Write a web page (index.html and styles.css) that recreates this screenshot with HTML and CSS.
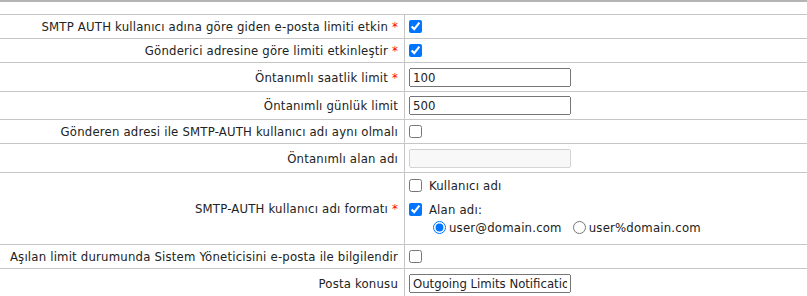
FILE: index.html
```html
<!DOCTYPE html>
<html lang="tr">
<head>
<meta charset="utf-8">
<title>Giden e-posta limitleri</title>
<link rel="stylesheet" href="styles.css">
</head>
<body>
<div class="form">
  <div class="head"></div>

  <div class="row r24">
    <div class="label">SMTP AUTH kullanıcı adına göre giden e-posta limiti etkin <span class="req">*</span></div>
    <div class="field"><input type="checkbox" class="cb" checked></div>
  </div>

  <div class="row r24">
    <div class="label">Gönderici adresine göre limiti etkinleştir <span class="req">*</span></div>
    <div class="field"><input type="checkbox" class="cb" checked></div>
  </div>

  <div class="row r29">
    <div class="label">Öntanımlı saatlik limit <span class="req">*</span></div>
    <div class="field"><input type="text" class="txt" value="100"></div>
  </div>

  <div class="row r28">
    <div class="label">Öntanımlı günlük limit</div>
    <div class="field"><input type="text" class="txt" value="500"></div>
  </div>

  <div class="row r24">
    <div class="label">Gönderen adresi ile SMTP-AUTH kullanıcı adı aynı olmalı</div>
    <div class="field"><input type="checkbox" class="cb"></div>
  </div>

  <div class="row r29">
    <div class="label">Öntanımlı alan adı</div>
    <div class="field"><input type="text" class="txt" disabled></div>
  </div>

  <div class="row r72">
    <div class="label">SMTP-AUTH kullanıcı adı formatı <span class="req">*</span></div>
    <div class="field multi">
      <label class="opt"><input type="checkbox" class="cb"> Kullanıcı adı</label>
      <label class="opt"><input type="checkbox" class="cb" checked> Alan adı:</label>
      <div class="radios">
        <label class="radio"><input type="radio" name="fmt" class="rb" checked>user@domain.com</label>
        <label class="radio"><input type="radio" name="fmt" class="rb">user%domain.com</label>
      </div>
    </div>
  </div>

  <div class="row r24">
    <div class="label">Aşılan limit durumunda Sistem Yöneticisini e-posta ile bilgilendir</div>
    <div class="field"><input type="checkbox" class="cb"></div>
  </div>

  <div class="row r29">
    <div class="label">Posta konusu</div>
    <div class="field"><input type="text" class="txt" value="Outgoing Limits Notification"></div>
  </div>
</div>
</body>
</html>
```

FILE: styles.css
```css
html, body {
  margin: 0;
  padding: 0;
  background: #fff;
}

body {
  font-family: "DejaVu Sans Condensed", "DejaVu Sans", sans-serif;
  font-size: 13px;
  letter-spacing: 0.2px;
  color: #222;
}

.form {
  width: 807px;
}

.head {
  height: 12px;
  border-top: 2px solid #b4b4b4;
}

.row {
  display: grid;
  grid-template-columns: 405px 1fr;
  border-top: 1px solid #c6c6c6;
  box-sizing: border-box;
}

.r24 { height: 24px; }
.r28 { height: 28px; }
.r29 { height: 29px; }
.r72 { height: 72px; }

.label {
  display: flex;
  align-items: center;
  justify-content: flex-end;
  padding-right: 6px;
  border-right: 1px solid #c6c6c6;
  white-space: pre;
}

.req {
  color: #f00;
}

.field {
  display: flex;
  align-items: center;
}

.cb {
  width: 13px;
  height: 13px;
  margin: 0 3px 0 4px;
}

.txt {
  box-sizing: border-box;
  width: 162px;
  height: 19px;
  margin: 0 0 0 4px;
  padding: 1px 2px;
  font-family: "DejaVu Sans Condensed", "DejaVu Sans", sans-serif;
  font-size: 13px;
  letter-spacing: 0;
  color: #222;
}

.multi {
  flex-direction: column;
  align-items: flex-start;
  justify-content: flex-start;
}

.opt {
  height: 24px;
  display: flex;
  align-items: center;
  white-space: pre;
}

.radios {
  display: flex;
  align-items: center;
  height: 13px;
  padding-left: 23px;
}

.radio {
  display: flex;
  align-items: center;
  margin-right: 6px;
}

.rb {
  width: 13px;
  height: 13px;
  margin: 0 3px 0 5px;
}
```
